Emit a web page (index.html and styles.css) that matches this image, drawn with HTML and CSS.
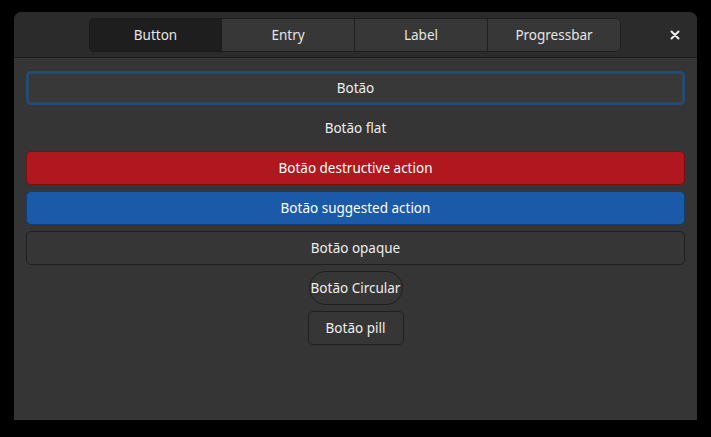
FILE: index.html
```html
<!DOCTYPE html>
<html lang="pt">
<head>
<meta charset="utf-8">
<link rel="stylesheet" href="styles.css">
</head>
<body>
<div class="window">
  <header class="headerbar">
    <div class="switcher">
      <div class="tab active">Button</div>
      <div class="tab">Entry</div>
      <div class="tab">Label</div>
      <div class="tab">Progressbar</div>
    </div>
    <div class="close">
      <svg width="10" height="10" viewBox="0 0 10 10"><path d="M1.5 1.5 L8.5 8.5 M8.5 1.5 L1.5 8.5" stroke="#eeeeec" stroke-width="2" stroke-linecap="round"/></svg>
    </div>
  </header>
  <main class="content">
    <div class="btn focused">Botão</div>
    <div class="btn flat">Botão flat</div>
    <div class="btn destructive">Botão destructive action</div>
    <div class="btn suggested">Botão suggested action</div>
    <div class="btn opaque">Botão opaque</div>
    <div class="btn circular">Botão Circular</div>
    <div class="btn pill">Botão pill</div>
  </main>
</div>
</body>
</html>
```
FILE: styles.css
```css
html, body {
  margin: 0;
  padding: 0;
  background: #000;
  width: 711px;
  height: 437px;
  overflow: hidden;
}
body {
  font-family: "Noto Sans", "Open Sans", sans-serif;
  font-size: 13.5px;
  color: #eeeeec;
  padding: 12px 14px 0 14px;
  box-sizing: border-box;
}
.window {
  width: 683px;
  height: 408px;
  background: #353535;
  border-radius: 8px 8px 0 0;
  display: flex;
  flex-direction: column;
  overflow: hidden;
}
.headerbar {
  height: 45px;
  background: #2b2b2b;
  border-bottom: 1px solid #1b1b1b;
  display: flex;
  align-items: center;
  padding-left: 75px;
  padding-right: 10px;
  flex: none;
}
.switcher {
  display: flex;
  height: 34px;
  margin-top: 1px;
}
.tab {
  width: 133px;
  box-sizing: border-box;
  display: flex;
  align-items: center;
  justify-content: center;
  background: #373737;
  border: 1px solid #1f1f1f;
  border-left: none;
  color: #e6e6e4;
}
.tab:first-child {
  border-left: 1px solid #1f1f1f;
  border-radius: 5px 0 0 5px;
}
.tab:last-child {
  border-radius: 0 5px 5px 0;
}
.tab.active {
  background: #1e1e1e;
  border-color: #1a1a1a;
}
.close {
  margin-left: auto;
  width: 24px;
  height: 24px;
  display: flex;
  align-items: center;
  justify-content: center;
}
.content {
  flex: 1;
  display: flex;
  flex-direction: column;
  align-items: stretch;
  padding: 13px 12px 0 12px;
  gap: 6px;
}
.btn {
  height: 34px;
  box-sizing: border-box;
  border: 1px solid #1f1f1f;
  border-radius: 5px;
  background: #383838;
  display: flex;
  align-items: center;
  justify-content: center;
  color: #eeeeec;
}
.btn.focused {
  border: 2px solid #234c7e;
  box-shadow: inset 0 0 1px 1px rgba(44, 90, 144, 0.5);
  background: #383838;
}
.btn.flat {
  border-color: transparent;
  background: transparent;
}
.btn.destructive {
  background: #b0171f;
  border-color: #7a0e14;
  color: #ffffff;
}
.btn.suggested {
  background: #1a5aa8;
  border-color: #113d75;
  color: #ffffff;
}
.btn.opaque {
  background: #363636;
  border-color: #1f1f1f;
}
.btn.circular {
  align-self: center;
  width: 94px;
  border-radius: 17px;
  background: #363636;
  height: 34px;
}
.btn.pill {
  align-self: center;
  width: 96px;
  background: #363636;
}
```
